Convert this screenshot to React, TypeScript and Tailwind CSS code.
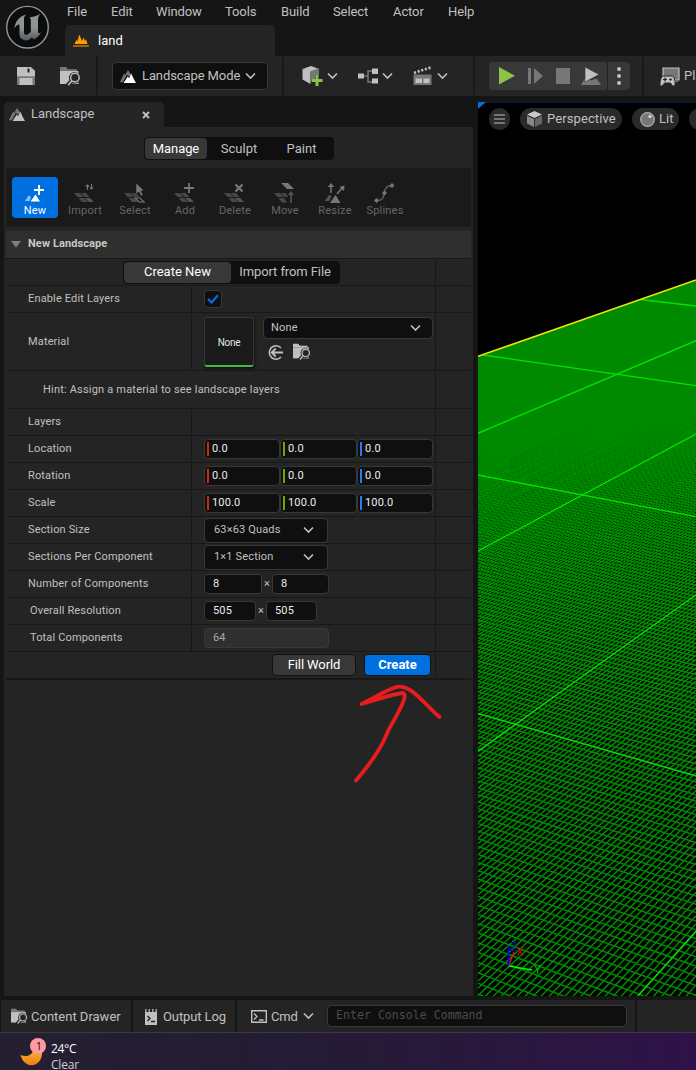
import React from "react";

const chevron = "M1 1.5 L5.5 6 L10 1.5";

function Chevron({ className = "" }: { className?: string }) {
  return (
    <svg width="11" height="8" viewBox="0 0 11 8" className={"shrink-0 " + className}>
      <path d={chevron} fill="none" stroke="#c0c0c0" strokeWidth="1.6" />
    </svg>
  );
}

function Mountains({ front, back }: { front: string; back: string }) {
  return (
    <svg width="17" height="15" viewBox="0 0 17 15" className="shrink-0">
      <path d="M0 13 L4.2 4.5 L5.3 6 L8 1 L11 5.5 L9 7.5 L6.8 5.8 L3.5 12 L2 13.5 Z" fill={back} />
      <path d="M3.5 14 L7.8 7.6 L9 9.3 L11.2 4.6 L13.8 10 L16 14 Z" fill={front} />
    </svg>
  );
}

function FolderSearch({ size = 21, tab = "#777" }: { size?: number; tab?: string }) {
  const bg = "#242424";
  return (
    <svg width={size} height={size} viewBox="0 0 21 21" className="shrink-0">
      <path d="M0 5 V1 H6 L8 3.2 H17 V5 Z" fill={tab} />
      <path d="M0 5 H18.5 V18 H0 Z" fill="#c0c0c0" />
      <circle cx="14.6" cy="11.8" r="5.8" fill={bg} />
      <path d="M12.3 14.5 L7.5 19.5" stroke={bg} strokeWidth="4.4" />
      <circle cx="14.9" cy="11.6" r="4.3" fill={bg} stroke="#b4b4b4" strokeWidth="1.6" />
      <path d="M12 14.6 L8.2 19.200" stroke="#b4b4b4" strokeWidth="1.7" />
    </svg>
  );
}

function Logo() {
  return (
    <svg width="46" height="46" viewBox="0 0 46 46" className="shrink-0">
      <defs>
        <linearGradient id="metal" x1="0" y1="0" x2="0" y2="1">
          <stop offset="0" stopColor="#8f9497" />
          <stop offset="0.5" stopColor="#8f9497" />
          <stop offset="1" stopColor="#555b5e" />
        </linearGradient>
      </defs>
      <circle cx="22.500" cy="22.200" r="20.800" fill="#0c0c0c" stroke="#929699" strokeWidth="1.400" />
      <path
        d="M9.5 23.5 C10.2 16.5 14 11.5 21 9.5 C19.5 11 19 12.5 19 14.5 V27.5 C19 29.5 21 30.5 23 29.3 L25.8 27 V15 C25.8 13.2 25 12.6 24 12.4 C27.5 12.2 31 11.5 35.2 8.8 C33.5 11.4 33 12.8 33 15.5 V26.5 C33 28.5 34.2 28.6 36 27.2 C34.3 31 31.5 33 29 34.5 L26.8 32.2 C25 35 21.5 36.5 17.8 34.6 C15 33.2 14.5 31 14.5 28.5 V20.5 C14.5 18.5 11.5 19.5 9.5 23.5 Z"
        fill="url(#metal)"
      />
    </svg>
  );
}

const menu: [string, string][] = [
  ["File", "w-[44px]"],
  ["Edit", "w-[45px]"],
  ["Window", "w-[69px]"],
  ["Tools", "w-[56px]"],
  ["Build", "w-[52px]"],
  ["Select", "w-[60px]"],
  ["Actor", "w-[55px]"],
  ["Help", "w-[40px]"],
];

function TitleBar() {
  return (
    <header className="flex h-14 shrink-0 bg-[#151515]">
      <div className="w-[65px] shrink-0 pt-[5px] pl-[5px]">
        <Logo />
      </div>
      <div className="flex flex-col">
        <nav className="flex h-[25px] items-center pb-[2px] pl-[2px] text-[13px] tracking-[-0.1px] text-[#c0c0c0]">
          {menu.map(([m, w]) => (
            <span key={m} className={w}>
              {m}
            </span>
          ))}
        </nav>
        <div className="flex h-[31px] w-[210px] items-center rounded-t-[5px] bg-[#242424] pl-2">
          <svg width="16" height="14" viewBox="0 0 16 14">
            <path d="M1.5 10 L3.5 6 L4.5 7 L6.3 0.5 L9 7 L10.5 3.5 L12 7 L13 5 L14.5 10 Z" fill="#ff9c00" />
            <path d="M0 11 H16 V13 H0 Z" fill="#a36300" />
          </svg>
          <span className="ml-[9px] text-[13px] text-white">land</span>
        </div>
      </div>
    </header>
  );
}

function Separator() {
  return <div className="h-[39px] w-[2px] shrink-0 self-start bg-[#181818]" />;
}

function Toolbar() {
  return (
    <div className="flex h-10 w-[696px] shrink-0 items-center overflow-hidden bg-[#242424] text-[13px] text-[#c0c0c0]">
      <div className="flex w-24 shrink-0 items-center pl-[17px]">
        <svg width="18" height="18" viewBox="0 0 18 18">
          <path d="M0 0 H14.5 L18 3.5 V18 H0 Z" fill="#777" />
          <path d="M0 0 H3 V7 H14 V1 L18 4 V10 H0 Z M2.5 11 H15.5 V18 H2.5 Z" fill="#c0c0c0" />
          <path d="M3 0 H14 V7 H3 Z" fill="#c0c0c0" />
          <path d="M10.5 1.5 H12.5 V5.5 H10.5 Z" fill="#222" />
          <path d="M0 9.3 H18 V11 H0 Z" fill="#777" />
        </svg>
        <div className="ml-[25px]">
          <FolderSearch />
        </div>
      </div>
      <Separator />
      <div className="ml-[14px] flex h-7 w-[156px] shrink-0 items-center rounded-[4px] border border-[#383838] bg-[#0f0f0f] pl-[7px]">
        <Mountains front="#ffffff" back="#777777" />
        <span className="ml-[5px] w-[99px] whitespace-nowrap tracking-[-0.1px]">Landscape Mode</span>
        <Chevron className="ml-[4px]" />
      </div>
      <div className="ml-[14px]">
        <Separator />
      </div>
      <div className="ml-[18px] flex w-[171px] shrink-0 items-center">
        <svg width="22" height="22" viewBox="0 0 22 22">
          <path d="M0.5 4 L9 1 L17 4 L8 7 Z" fill="#c0c0c0" />
          <path d="M0.5 4 L8.5 6 V19 L0.5 14.5 Z" fill="#c0c0c0" />
          <path d="M8.5 6 L17 3.5 V10 H13 V14 H9 V19 Z" fill="#777" />
          <path d="M13.500 10 H16.500 V14 H20.500 V17 H16.500 V21 H13.500 V17 H9.500 V14 H13.500 Z" fill="#8bc24a" />
        </svg>
        <Chevron className="ml-[3px]" />
        <svg width="21" height="17" viewBox="0 0 21 17" className="ml-[20px]">
          <path d="M6 8 H10 M14 3 H10 V14 H14" fill="none" stroke="#777" strokeWidth="1.5" />
          <path d="M0 5.500 H6 V10.500 H0 Z M14 0.500 H20 V6 H14 Z M14 10.500 H20 V15.500 H14 Z" fill="#c0c0c0" />
        </svg>
        <Chevron className="ml-[3px]" />
        <svg width="20" height="20" viewBox="0 0 20 20" className="ml-[20px]">
          <path d="M1 7 L18 1.300" stroke="#c0c0c0" strokeWidth="2.6" strokeDasharray="2.200 1.600" />
          <path d="M0.500 8.500 H18.500 V19 H0.500 Z" fill="#777" />
          <path d="M2.500 12.500 H9 V17 H2.500 Z M10.500 12.500 H16.500 V17 H10.500 Z" fill="#c0c0c0" />
        </svg>
        <Chevron className="ml-[4px]" />
      </div>
      <Separator />
      <div className="ml-[14px] flex h-7 w-[141px] shrink-0 overflow-hidden rounded-[4px] bg-[#383838]">
        <div className="flex w-[118px] items-center">
          <svg width="118" height="28" viewBox="0 0 118 28">
            <path d="M10 5 L26 13.700 L10 22.500 Z" fill="#8bc24a" />
            <path d="M39 6 H42 V22 H39 Z M45 6 L54 14 L45 22 Z" fill="#777" />
            <path d="M67 6 H81 V22 H67 Z" fill="#777" />
            <path d="M92 23 L95.500 17 H99 L102 18.500 L106 17 H108 L112 23 Z" fill="#777" />
            <path d="M96 5 L110 12.500 L96 20 Z" fill="#c0c0c0" stroke="#383838" strokeWidth="0.6" />
          </svg>
        </div>
        <div className="flex w-[23px] flex-col items-center justify-center gap-[3px] border-l border-[#242424]">
          <i className="size-[4px] rounded-full bg-[#c0c0c0]" />
          <i className="size-[4px] rounded-full bg-[#c0c0c0]" />
          <i className="size-[4px] rounded-full bg-[#c0c0c0]" />
        </div>
      </div>
      <div className="ml-[12px]">
        <Separator />
      </div>
      <svg width="22" height="21" viewBox="0 0 22 21" className="ml-[15px] shrink-0">
        <path d="M4 2 H20 V14 H4 Z" fill="#777" stroke="#c0c0c0" strokeWidth="1.2" />
        <path
          d="M1 18.500 C1 14 2 10.500 4.500 10 H13 C15 10.500 16.500 14.500 16 18.500 C15.500 21 13.500 20.500 11.500 17 H5.500 C3.500 20.500 1.500 21 1 18.500 Z"
          fill="#c0c0c0"
          stroke="#242424"
          strokeWidth="1"
        />
        <path d="M4 13.500 H8 M6 11.500 V15.500 M11.500 12.200 V14.800 M10.200 13.500 H12.800" stroke="#242424" strokeWidth="1.2" />
        <path d="M16 15.500 H19" stroke="#777" />
      </svg>
      <span className="ml-[3px] whitespace-nowrap">Platforms</span>
    </div>
  );
}

const tile = "#555";

function ToolIcon({ name }: { name: string }) {
  const fg = "#777";
  return (
    <svg width="22" height="20" viewBox="0 0 22 20" className="overflow-visible">
      {name === "New" && (
        <>
          <path d="M1 18 L4.500 12.500 L7 14 L5.500 18 Z" fill="#8cc0f2" />
          <path d="M6.500 18.500 L11.500 11.500 L16 18.500 Z" fill="#fff" />
          <path d="M15 2 V12 M10 7 H20" stroke="#fff" strokeWidth="2" />
        </>
      )}
      {["Import", "Select", "Add", "Delete"].includes(name) && (
        <>
          <path d="M0 10 H6 L9.500 14 H3.500 Z M7 10 H12 L15.500 14 H10.500 Z M4.500 15 H10 L14 19 H8 Z" fill="#484848" />
          <path d="M11 15 H16 L20 19 H15 Z" fill={name === "Select" ? "none" : tile} stroke={fg} strokeWidth={name === "Select" ? 1.1 : 0} />
        </>
      )}
      {name === "Import" && (
        <path d="M13.500 7 V2 M12 3.500 L13.500 2 L15 3.500 M17.500 1 V6 M16 4.500 L17.500 6 L19 4.500" fill="none" stroke={fg} strokeWidth="1.100" />
      )}
      {name === "Select" && <path d="M12 0 L20 7.500 L17 8 L19 12 L17 13 L15 9 L12 11 Z" fill={fg} stroke="#1a1a1a" strokeWidth="0.5" />}
      {name === "Add" && <path d="M15 0 V10 M10 5 H20" stroke={fg} strokeWidth="1.800" />}
      {name === "Delete" && <path d="M11.500 1.500 L18.500 8.500 M18.500 1.500 L11.500 8.500" stroke={fg} strokeWidth="2.300" />}
      {name === "Move" && (
        <>
          <path d="M7 0 H14 L20 6 H13 Z" fill={fg} />
          <path d="M0 10 H6 L9.500 14 H3.500 Z M7 10 H12 L14 14 H10.500 Z M4.500 15 H10 L13 19.500 H8 Z" fill="#484848" />
          <path d="M17 20 V11" fill="none" stroke={tile} strokeWidth="1.600" />
          <path d="M14 12 L17 8 L20 12 Z" fill={tile} />
        </>
      )}
      {name === "Resize" && (
        <>
          <path d="M1 18 L5 12 L7.500 13 L5 18 Z" fill="#555" />
          <path d="M6 20 L11.500 12 L16.500 20 Z" fill={fg} />
          <path d="M7 10 V3 M13 11 L19 4" stroke={fg} strokeWidth="1.500" />
          <path d="M3.800 4 L7 0 L10.200 4 Z M20.500 2.500 L20 8 L15.500 4 Z" fill={fg} />
        </>
      )}
      {name === "Splines" && (
        <>
          <path d="M3 17.500 C15 18 5 3 18 2.500" fill="none" stroke="#555" strokeWidth="1.600" />
          <path d="M0 17.500 L2.500 15 L5 17.500 L2.500 20 Z M8 10 L10.500 7.500 L13 10 L10.500 12.500 Z M15.500 2.500 L18 0 L20.500 2.500 L18 5 Z" fill={fg} />
        </>
      )}
    </svg>
  );
}

const tools = ["New", "Import", "Select", "Add", "Delete", "Move", "Resize", "Splines"];

function Row({ label, h = "h-[27px]", children, indent = "pl-[22px]" }: { label: string; h?: string; children?: React.ReactNode; indent?: string }) {
  return (
    <div className={"flex border-b border-[#181818] " + h}>
      <div className={"flex w-[186px] items-center border-r border-[#181818] " + indent}>{label}</div>
      <div className="flex w-[244px] items-center border-r border-[#181818] pl-[12px]">{children}</div>
    </div>
  );
}

const boxBase = "flex items-center rounded-[4px] border border-[#383838] bg-[#0f0f0f] shrink-0 ";

function Num({ value, w = "w-[57px]" }: { value: string; w?: string }) {
  return <div className={boxBase + "h-5 pl-2 text-[#ececec] " + w}>{value}</div>;
}

function Vec({ value }: { value: string }) {
  const axes: [string, string][] = [
    ["bg-[#d1260c]", "w-[76px]"],
    ["bg-[#6aa800]", "w-[77px]"],
    ["bg-[#2c7be8]", "w-[76px]"],
  ];
  return (
    <div className="flex">
      {axes.map(([color, w]) => (
        <div key={color} className={boxBase + "h-5 pl-[2px] text-[#ececec] " + w}>
          <i className={"mr-[3px] h-[14px] w-[2px] " + color} />
          <span>{value}</span>
        </div>
      ))}
    </div>
  );
}

function Combo({ value }: { value: string }) {
  return (
    <div className={boxBase + "h-[25px] w-[124px] justify-between pr-[13px] pl-[9px]"}>
      <span>{value}</span>
      <Chevron />
    </div>
  );
}

function LandscapePanel() {
  return (
    <section className="flex w-[474px] shrink-0 flex-col pl-1">
      <div className="flex h-[25px] w-[160px] shrink-0 items-center rounded-t-[5px] bg-[#242424] pl-[5px] text-[13px] text-[#c0c0c0]">
        <Mountains front="#c0c0c0" back="#777777" />
        <span className="ml-[5px] w-[111px] pb-px">Landscape</span>
        <svg width="8" height="8" viewBox="0 0 8 8">
          <path d="M1 1 L7 7 M7 1 L1 7" stroke="#c0c0c0" strokeWidth="1.900" />
        </svg>
      </div>
      <div className="flex h-[869px] w-[469px] flex-col bg-[#242424] pt-[10px] pr-[2px] pl-[2px]">
        <div className="ml-[138px] flex h-[23px] w-[190px] shrink-0 rounded-[4px] bg-[#0f0f0f] p-px text-[13px] text-[#c0c0c0]">
          <span className="flex w-[62px] items-center justify-center rounded-[4px] bg-[#383838] tracking-[-0.1px] text-white">Manage</span>
          <span className="flex w-[64px] items-center justify-center">Sculpt</span>
          <span className="flex w-[61px] items-center justify-center">Paint</span>
        </div>
        <div className="mt-2 flex h-[59px] shrink-0 bg-[#1a1a1a] pt-[9px] pl-[6px]">
          {tools.map((t, i) => (
            <div
              key={t}
              className={
                "mr-1 flex h-[41px] w-[46px] flex-col items-center rounded-[4px] pt-[6px] text-[11px] tracking-[0.2px] " +
                (i === 0 ? "bg-[#0070e0] text-white" : "text-[#666]")
              }
            >
              <ToolIcon name={t} />
              <span className="-mt-px leading-[18px]">{t}</span>
            </div>
          ))}
        </div>
        <div className="mt-1 flex h-[28px] shrink-0 items-center border-b border-[#181818] bg-[#2f2f2f] pl-[5px] text-[11px] font-bold text-[#c8c8c8]">
          <svg width="10" height="7" viewBox="0 0 10 7">
            <path d="M0 0 H10 L5 6.500 Z" fill="#808080" />
          </svg>
          <span className="ml-[7px] pb-[2px] tracking-[0.1px]">New Landscape</span>
        </div>
        <div className="text-[11px] tracking-[0.15px] text-[#c0c0c0]">
          <div className="flex h-[27px] border-b border-[#181818] text-[13px] tracking-normal">
            <div className="flex w-[430px] items-center border-r border-[#181818] pl-[117px]">
              <div className="flex h-[23px] w-[217px] rounded-[4px] bg-[#0f0f0f] p-px">
                <span className="flex w-[107px] items-center justify-center rounded-[4px] bg-[#383838] text-white">Create New</span>
                <span className="flex w-[108px] items-center justify-center tracking-[-0.1px]">Import from File</span>
              </div>
            </div>
          </div>
          <Row label="Enable Edit Layers">
            <div className={boxBase + "size-[18px] justify-center"}>
              <svg width="12" height="10" viewBox="0 0 12 10">
                <path d="M1 5 L4.500 8.500 L11 1.200" fill="none" stroke="#0070e0" strokeWidth="2.200" />
              </svg>
            </div>
          </Row>
          <Row label="Material" h="h-[58px]">
            <div className="flex h-[50px] w-[50px] items-center justify-center rounded-[3px] border border-[#383838] border-b-2 border-b-[#42b842] bg-[#1a1a1a] pt-[3px] text-[10px] tracking-[-0.25px] text-[#e4e4e4] shadow-[1px_2px_3px_#111]">
              <span>None</span>
            </div>
            <div className="ml-[9px] flex flex-col pb-[5px]">
              <div className={boxBase + "h-[22px] w-[170px] justify-between pr-[11px] pl-[7px]"}>
                <span>None</span>
                <Chevron />
              </div>
              <div className="mt-[4px] flex h-[18px] items-center gap-[9px] pl-1">
                <svg width="17" height="17" viewBox="0 0 17 17">
                  <path d="M14 4 A6.700 6.700 0 1 0 14 13" fill="none" stroke="#c0c0c0" strokeWidth="1.600" />
                  <path d="M16 8.500 H5 M8.700 4.500 L4.700 8.500 L8.700 12.500" fill="none" stroke="#c0c0c0" strokeWidth="1.800" />
                </svg>
                <FolderSearch size={18} tab="#c0c0c0" />
              </div>
            </div>
          </Row>
          <div className="flex h-[38px] border-b border-[#181818]">
            <div className="flex w-[430px] items-center border-r border-[#181818] pl-[37px] tracking-[0.19px]">Hint: Assign a material to see landscape layers</div>
          </div>
          <Row label="Layers" />
          <Row label="Location">
            <Vec value="0.0" />
          </Row>
          <Row label="Rotation">
            <Vec value="0.0" />
          </Row>
          <Row label="Scale">
            <Vec value="100.0" />
          </Row>
          <Row label="Section Size">
            <Combo value="63×63 Quads" />
          </Row>
          <Row label="Sections Per Component">
            <Combo value="1×1 Section" />
          </Row>
          <Row label="Number of Components">
            <Num value="8" w="w-[58px]" />
            <span className="w-[10px] text-center">×</span>
            <Num value="8" w="w-[57px]" />
          </Row>
          <Row label="Overall Resolution" indent="pl-[24px]">
            <Num value="505" w="w-[52px]" />
            <span className="w-[10px] text-center">×</span>
            <Num value="505" w="w-[51px]" />
          </Row>
          <Row label="Total Components" indent="pl-[24px]">
            <div className="h-5 w-[125px] rounded-[4px] border border-[#383838] bg-[#2f2f2f] pl-2 leading-[17px] text-[#a8a8a8]">64</div>
          </Row>
          <div className="flex h-[28px] border-b-2 border-[#181818] text-[13px] tracking-normal text-white">
            <div className="flex w-[430px] items-center border-r border-[#181818] pl-[266px]">
              <div className="flex h-[22px] w-[84px] items-center justify-center rounded-[4px] border border-[#111] bg-[#383838] tracking-[-0.1px]">Fill World</div>
              <div className="ml-[8px] flex h-[22px] w-[67px] items-center justify-center rounded-[4px] border border-[#111] bg-[#0070e0] font-bold">Create</div>
            </div>
          </div>
        </div>
      </div>
    </section>
  );
}

type Curve = [number, number, number];
const at = ([a, b, c]: Curve, t: number) => (a + b * t) / (1 + c * t);

// Each grid line is described by its height at the left and right edges of the view.
function gridPath(left: Curve, right: Curve, from: number, to: number) {
  let d = "";
  for (let i = Math.round(from * 63); i <= Math.round(to * 63); i++) {
    const t = i / 63;
    d += `M0 ${(at(left, t) - 102).toFixed(2)}L218 ${(at(right, t) - 102).toFixed(2)}`;
  }
  return d;
}

const rowsPath = gridPath([475, 4.8, -0.3274], [516.7, 4.2, -0.3287], -5, 2.1);
const colsPath = gridPath([551, 5.6, -0.2598], [434, 4.4, -0.2625], -2, 3);

function Viewport() {
  return (
    <section className="relative h-[894px] w-[218px] shrink-0 overflow-hidden bg-black">
      <svg width="218" height="894" viewBox="0 0 218 894" className="block">
        <defs>
          <clipPath id="ground">
            <path d="M0 254.500 L218 178 V894 H0 Z" />
          </clipPath>
        </defs>
        <g clipPath="url(#ground)" fill="none">
          <g stroke="#008a00" strokeWidth="1.5">
            <path d={rowsPath} />
            <path d={colsPath} />
          </g>
          <path
            d="M162 197.500 L218 204 M5 253 L218 283.700 M0 373 L218 414.700 M0 611.500 L218 674 M0 331.300 L218 238.700 M0 449 L218 332 M0 649 L218 493 M160 894 L218 829"
            stroke="#00e400"
            strokeWidth="1.300"
          />
        </g>
        <path d="M0 254.300 L218 178" stroke="#f0e800" strokeWidth="1.600" />
        <path d="M0 0.500 H218" stroke="#001e3c" />
        <path d="M0 0 H8 L0 7 Z" fill="#0070e0" />
        <g fill="none">
          <path d="M30.500 864 L36 850" stroke="#f00" strokeWidth="1.500" />
          <path d="M30.500 864 L54 868" stroke="#0f0" strokeWidth="1.300" />
          <path d="M30.500 864 V844" stroke="#00f" strokeWidth="1.700" />
        </g>
        <g fontFamily="Roboto, sans-serif" fontSize="12">
          <text x="32" y="849" fill="#0010b8">Z</text>
          <text x="38" y="854" fill="#c00000">X</text>
          <text x="56" y="872" fill="#00b800">Y</text>
        </g>
      </svg>
      <div className="absolute top-[6px] left-[11px] flex w-[300px] text-[13px] text-[#c0c0c0]">
        <div className="flex size-[21px] h-[22px] items-center justify-center rounded-full bg-[#2a2a2a]">
          <svg width="11" height="10" viewBox="0 0 11 10">
            <path d="M0 1 H11 M0 5 H11 M0 9 H11" stroke="#c0c0c0" strokeWidth="1.200" />
          </svg>
        </div>
        <div className="ml-[10px] flex h-[22px] w-[102px] items-center rounded-full bg-[#2a2a2a] pl-[7px]">
          <svg width="15" height="16" viewBox="0 0 15 16" className="shrink-0">
            <path d="M0 3.500 L7.500 0 L15 3.500 L7.500 7 Z" fill="#c8c8c8" />
            <path d="M0 4.700 L7 8 V16 L0 12.500 Z" fill="#888" />
            <path d="M15 4.700 L8 8 V16 L15 12.500 Z" fill="#666" />
          </svg>
          <span className="ml-[5px] tracking-[0.1px]">Perspective</span>
        </div>
        <div className="ml-[10px] flex h-[22px] w-[47px] items-center rounded-full bg-[#2a2a2a] pl-[8px]">
          <svg width="15" height="15" viewBox="0 0 15 15" className="shrink-0">
            <circle cx="7.500" cy="7.500" r="6.800" fill="#777" stroke="#b0b0b0" strokeWidth="1.200" />
            <circle cx="10" cy="4.500" r="1.600" fill="#ddd" />
          </svg>
          <span className="ml-[4px]">Lit</span>
        </div>
        <div className="ml-[10px] h-[22px] w-[60px] rounded-full bg-[#2a2a2a]" />
      </div>
    </section>
  );
}

function StatusBar() {
  return (
    <footer className="flex h-8 w-[696px] shrink-0 gap-[2px] overflow-hidden pl-px text-[13px] text-[#c0c0c0]">
      <div className="flex w-[130px] shrink-0 items-center bg-[#242424] pt-px pl-[10px]">
        <FolderSearch size={17} />
        <span className="ml-[3px] whitespace-nowrap">Content Drawer</span>
      </div>
      <div className="flex w-[102px] shrink-0 items-center bg-[#242424] pt-px pl-[12px]">
        <svg width="12" height="16" viewBox="0 0 12 16">
          <path d="M0 3 H12 V16 H0 Z" fill="#c0c0c0" />
          <path d="M0.800 0 V3 M4.200 0 V3 M7.800 0 V3 M11.200 0 V3" stroke="#c0c0c0" strokeWidth="1.200" />
          <path d="M2.500 7 L5 9.500 L2.500 12 M6 12.500 H10" fill="none" stroke="#222" strokeWidth="1.400" />
        </svg>
        <span className="ml-[6px] whitespace-nowrap tracking-[-0.1px]">Output Log</span>
      </div>
      <div className="flex w-[398px] shrink-0 items-center bg-[#242424] pl-[14px]">
        <svg width="16" height="13" viewBox="0 0 16 13">
          <path d="M0.700 0.700 H15.300 V12.300 H0.700 Z" fill="none" stroke="#c0c0c0" strokeWidth="1.400" />
          <path d="M3 3.500 L6 6.500 L3 9.500 M8 10 H12.500" fill="none" stroke="#c0c0c0" strokeWidth="1.300" />
        </svg>
        <span className="ml-[4px] w-[32px] pt-px tracking-[-0.2px]">Cmd</span>
        <Chevron />
        <div className="ml-[13px] flex h-[22px] w-[300px] items-center rounded-[4px] border border-[#383838] bg-[#0f0f0f] pb-[2px] pl-2 font-['DejaVu_Sans_Mono',monospace] text-[11.6px] text-[#4c4c4c]">
          Enter Console Command
        </div>
      </div>
      <div className="grow bg-[#242424]" />
    </footer>
  );
}

function Taskbar() {
  return (
    <div className="flex h-[38px] w-[696px] shrink-0 overflow-hidden border-t border-[#3c3947] bg-linear-to-r from-[#241f30] via-[#251b36] to-[#2f1249] pl-[20px]">
      <svg width="27" height="34" viewBox="0 0 27 34" className="shrink-0">
        <defs>
          <linearGradient id="moon" x1="0" y1="0" x2="0" y2="1">
            <stop offset="0" stopColor="#ffc23d" />
            <stop offset="1" stopColor="#ee7d16" />
          </linearGradient>
        </defs>
        <path d="M0.500 22 C7 25 14 22 15 12 C22 14 24 21 20 27.500 C15 35 3.500 34 0.500 22 Z" fill="url(#moon)" />
        <circle cx="18" cy="13" r="8" fill="#ff99a4" />
        <text x="15.800" y="17" fontSize="11" fontFamily="Open Sans, sans-serif" fill="#201018">1</text>
      </svg>
      <div className="ml-[4px] pt-[8px] font-['Open_Sans',sans-serif] text-[12px] leading-[15.500px] text-white">
        <div className="tracking-[-0.3px]">24°C</div>
        <div className="tracking-[-0.2px] text-[#d0ced4]">Clear</div>
      </div>
    </div>
  );
}

export default function App() {
  return (
    <div className="relative flex h-[1070px] w-[696px] flex-col overflow-hidden bg-[#151515] font-[Roboto,sans-serif] leading-4">
      <TitleBar />
      <Toolbar />
      <main className="flex h-[904px] shrink-0 gap-1 pt-[6px]">
        <LandscapePanel />
        <Viewport />
      </main>
      <StatusBar />
      <Taskbar />
      <svg width="100" height="110" viewBox="0 0 100 110" className="pointer-events-none absolute top-[680px] left-[350px]">
        <path
          d="M11.500 24 C26 17 40 8 48 6.700 C63 6 73 23 89.500 37 M11.500 24 C26 20 42 14 53 13 C59 15 47 35 39 49 C34 60 31 71 6 100.500"
          fill="none"
          stroke="#e81c1c"
          strokeWidth="3.800"
          strokeLinecap="round"
          strokeLinejoin="round"
        />
      </svg>
    </div>
  );
}
